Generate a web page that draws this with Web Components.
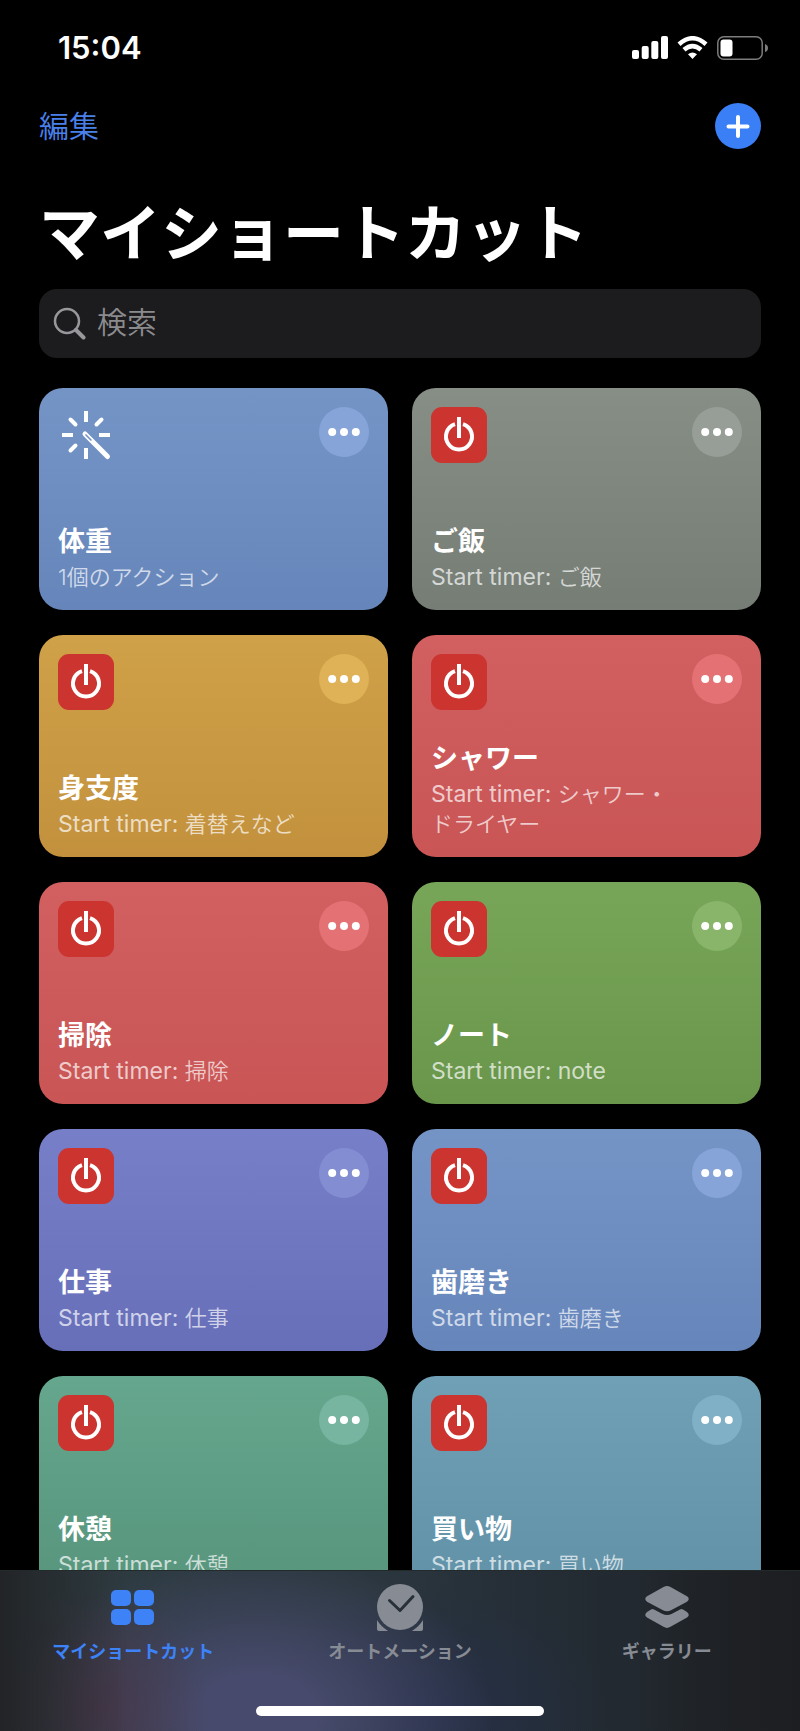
<!DOCTYPE html>
<html lang="ja">
<head>
<meta charset="utf-8">
<meta name="viewport" content="width=device-width, initial-scale=1">
<title>マイショートカット</title>
<style>
  body {
    margin: 0;
    background: #000;
    color: #fff;
    font-family: Inter, "Noto Sans CJK JP", sans-serif;
  }
</style>
</head>
<body>
<shortcuts-app>
  <status-bar slot="status">15:04</status-bar>
  <page-header slot="header">マイショートカット</page-header>
  <search-field slot="header" label="検索"></search-field>

  <shortcut-card color="blue" icon="wand"><span slot="title">体重</span>1個のアクション</shortcut-card>
  <shortcut-card color="gray"><span slot="title">ご飯</span><span lang="en">Start timer: </span>ご飯</shortcut-card>
  <shortcut-card color="yellow"><span slot="title">身支度</span><span lang="en">Start timer: </span>着替えなど</shortcut-card>
  <shortcut-card color="red"><span slot="title">シャワー</span><span lang="en">Start timer: </span>シャワー・<br>ドライヤー</shortcut-card>
  <shortcut-card color="red"><span slot="title">掃除</span><span lang="en">Start timer: </span>掃除</shortcut-card>
  <shortcut-card color="green"><span slot="title">ノート</span><span lang="en">Start timer: note</span></shortcut-card>
  <shortcut-card color="purple"><span slot="title">仕事</span><span lang="en">Start timer: </span>仕事</shortcut-card>
  <shortcut-card color="blue"><span slot="title">歯磨き</span><span lang="en">Start timer: </span>歯磨き</shortcut-card>
  <shortcut-card color="mint"><span slot="title">休憩</span><span lang="en">Start timer: </span>休憩</shortcut-card>
  <shortcut-card color="teal"><span slot="title">買い物</span><span lang="en">Start timer: </span>買い物</shortcut-card>

  <tab-bar slot="tabs">
    <tab-item icon="grid" active>マイショートカット</tab-item>
    <tab-item icon="clock">オートメーション</tab-item>
    <tab-item icon="layers">ギャラリー</tab-item>
  </tab-bar>
</shortcuts-app>

<script>
const CARD_COLORS = {
  blue: ["#7594c6", "#6686bb", "#86a4d8"],
  gray: ["#868e86", "#757d75", "#979e98"],
  yellow: ["#cfa148", "#c3913d", "#e0b257"],
  red: ["#d26061", "#c95555", "#e47274"],
  green: ["#78a659", "#69964a", "#88b569"],
  purple: ["#777fc8", "#676fb9", "#838ed2"],
  mint: ["#65a78e", "#57947c", "#77b5a0"],
  teal: ["#70a0b5", "#6091a7", "#7fb0c5"],
};

const CARD_ICONS = {
  wand: `
    <svg width="56" height="56" viewBox="0 0 56 56" fill="none" stroke="#fff" stroke-width="4" aria-hidden="true">
      <path d="M28 4v11M28 41v11M4 28h11M41 28h11"/>
      <path stroke-linecap="round" d="M12.5 12.5l5 5M43.5 12.5l-5 5M12.5 43.5l5-5"/>
      <path stroke-width="5" stroke-linecap="round" d="M27 27l22.5 22.5"/>
      <path stroke="#7190c4" stroke-width="1.5" d="M27.5 27.5l6 6"/>
    </svg>`,
  power: `
    <svg width="56" height="56" viewBox="0 0 56 56" fill="none" stroke="#fff" stroke-width="4" aria-hidden="true">
      <rect width="56" height="56" rx="11" fill="#cb342f" stroke="none"/>
      <path d="M24 17.1A13 13 0 1 0 32 17.1"/>
      <path d="M28 10v21"/>
    </svg>`,
};

const TAB_ICONS = {
  grid: `
    <svg width="48" height="48" viewBox="0 0 48 48" fill="currentColor" aria-hidden="true">
      <rect x="2" y="7" width="20" height="16" rx="5"/>
      <rect x="25" y="7" width="20" height="16" rx="5"/>
      <rect x="2" y="26" width="20" height="16" rx="5"/>
      <rect x="25" y="26" width="20" height="16" rx="5"/>
    </svg>`,
  clock: `
    <svg width="48" height="48" viewBox="0 0 48 48" fill="currentColor" aria-hidden="true">
      <circle cx="24" cy="24" r="23"/>
      <path d="M1 37Q4.500 43 12 48H3Q1 48 1 46ZM47 37Q43.500 43 36 48H45Q47 48 47 46Z"/>
      <path d="M13.500 17.500L24 27.500L37 13.500" fill="none" stroke="#28303a" stroke-width="3" stroke-linecap="round" stroke-linejoin="round"/>
    </svg>`,
  layers: `
    <svg width="48" height="48" viewBox="0 0 48 48" fill="currentColor" aria-hidden="true">
      <path d="M20.500 4Q24 2 27.500 4L44 13.300Q47.500 16 44 18.700L28 27.300Q24 29.300 20 27.300L4 18.700Q.500 16 4 13.300Z"/>
      <path d="M8 26.500Q9.500 25.700 11 26.500L19.500 31Q24 33.200 28.500 31L37 26.500Q38.500 25.700 40 26.500L44 29Q47.500 32 44 34.500L27.500 43.800Q24 46 20.500 43.800L4 34.500Q.500 32 4 29Z"/>
    </svg>`,
};

class ShadowElement extends HTMLElement {
  constructor() {
    super();
    this.attachShadow({ mode: "open" });
  }

  connectedCallback() {
    const template = document.createElement("template");
    template.innerHTML = `<style>${this.getStyles()}</style>${this.getTemplate()}`;
    this.shadowRoot.replaceChildren(template.content.cloneNode(true));
  }
}

class ShortcutsApp extends ShadowElement {
  getStyles() {
    return `
      :host {
        display: flex;
        flex-direction: column;
        height: 100vh;
      }
      header {
        padding: 0 39px;
      }
      main {
        flex: 1;
        min-height: 0;
        overflow: hidden;
        padding: 30px 39px 0;
      }
      .grid {
        display: grid;
        grid-template-columns: 1fr 1fr;
        gap: 25px 24px;
      }
    `;
  }

  getTemplate() {
    return `
      <slot name="status"></slot>
      <header><slot name="header"></slot></header>
      <main><div class="grid"><slot></slot></div></main>
      <slot name="tabs"></slot>
    `;
  }
}

class StatusBar extends ShadowElement {
  getStyles() {
    return `
      :host {
        display: flex;
        align-items: center;
        justify-content: space-between;
        height: 95px;
        padding: 0 32px 0 58px;
        font-size: 31px;
        font-weight: 600;
      }
      .icons {
        display: flex;
        align-items: center;
        gap: 9px;
      }
    `;
  }

  getTemplate() {
    return `
      <slot></slot>
      <div class="icons">
        <svg width="36" height="24" viewBox="0 0 36 24" fill="#fff" aria-hidden="true">
          <rect x="0" y="14" width="7" height="9" rx="2"/>
          <rect x="9.700" y="10" width="7" height="13" rx="2"/>
          <rect x="19.300" y="5" width="7" height="18" rx="2"/>
          <rect x="29" y="0" width="7" height="23" rx="2"/>
        </svg>
        <svg width="31" height="24" viewBox="0 0 31 24" fill="none" stroke="#fff" stroke-width="4.500" aria-hidden="true">
          <path d="M2 8.200Q15.500 -3.700 29 8.200"/>
          <path d="M7 13.800Q15.500 6.500 24 13.800"/>
          <path d="M11 18.200Q15.500 14.800 20 18.200L15.500 23Z" fill="#fff" stroke="none"/>
        </svg>
        <svg width="51" height="24" viewBox="0 0 51 24" aria-hidden="true">
          <rect x=".800" y=".800" width="44.400" height="22.400" rx="6" fill="none" stroke="#7c7c7c" stroke-width="1.500"/>
          <rect x="3.500" y="3.500" width="12" height="17" rx="3" fill="#fff"/>
          <path d="M48 8Q51 9 51 12T48 16Z" fill="#7c7c7c"/>
        </svg>
      </div>
    `;
  }
}

class PageHeader extends ShadowElement {
  getStyles() {
    return `
      :host {
        display: block;
      }
      .actions {
        display: flex;
        align-items: center;
        justify-content: space-between;
        height: 61px;
      }
      button {
        padding: 0;
        border: 0;
        background: none;
        font: inherit;
        cursor: pointer;
      }
      .edit {
        padding-bottom: 3px;
        color: #4a80ea;
        font-size: 30px;
        font-weight: 350;
      }
      .add {
        display: flex;
        width: 46px;
        height: 46px;
        border-radius: 50%;
        background: #3a7ff6;
      }
      h1 {
        margin: 0;
        padding: 34px 0 11px;
        font-size: 61px;
        line-height: 88px;
        font-weight: 700;
      }
    `;
  }

  getTemplate() {
    return `
      <div class="actions">
        <button class="edit" type="button">編集</button>
        <button class="add" type="button" aria-label="追加">
          <svg width="46" height="46" viewBox="0 0 46 46" stroke="#fff" stroke-width="4" stroke-linecap="round" aria-hidden="true">
            <path d="M23 14v19M13.500 23.500h19"/>
          </svg>
        </button>
      </div>
      <h1><slot></slot></h1>
    `;
  }
}

class SearchField extends ShadowElement {
  getStyles() {
    return `
      :host {
        display: block;
      }
      label {
        display: flex;
        align-items: center;
        gap: 11px;
        height: 69px;
        padding: 0 14px;
        border-radius: 18px;
        background: #1c1c1e;
      }
      input {
        flex: 1;
        min-width: 0;
        padding: 0 0 3px;
        border: 0;
        outline: 0;
        background: none;
        color: #fff;
        font: inherit;
        font-size: 30px;
        font-weight: 350;
      }
      input::placeholder {
        color: #8b8b8e;
        opacity: 1;
      }
    `;
  }

  getTemplate() {
    const label = this.getAttribute("label");
    return `
      <label>
        <svg width="33" height="33" viewBox="0 0 33 33" fill="none" stroke="#98989c" stroke-linecap="round" aria-hidden="true">
          <circle cx="14" cy="14" r="12" stroke-width="2.500"/>
          <path d="M23 23l7.500 7.500" stroke-width="4"/>
        </svg>
        <input type="search" placeholder="${label}" aria-label="${label}">
      </label>
    `;
  }
}

class ShortcutCard extends ShadowElement {
  getStyles() {
    const [top, bottom, button] = CARD_COLORS[this.getAttribute("color")];
    return `
      :host {
        display: flex;
        flex-direction: column;
        justify-content: space-between;
        box-sizing: border-box;
        min-height: 222px;
        padding: 19px 19px 18px;
        border-radius: 24px;
        background: linear-gradient(${top}, ${bottom});
      }
      .top {
        display: flex;
        align-items: flex-start;
        justify-content: space-between;
      }
      svg {
        display: block;
      }
      button {
        padding: 0;
        border: 0;
        border-radius: 50%;
        background: ${button};
        cursor: pointer;
      }
      h2, p {
        margin: 0;
      }
      h2 {
        font-size: 27px;
        line-height: 40px;
        font-weight: 700;
      }
      p {
        color: rgba(255, 255, 255, 0.7);
        font-size: 22px;
        line-height: 30px;
        font-weight: 350;
      }
      ::slotted(:lang(en)) {
        font-size: 23px;
        font-weight: 400;
      }
    `;
  }

  getTemplate() {
    return `
      <div class="top">
        ${CARD_ICONS[this.getAttribute("icon") || "power"]}
        <button type="button" aria-label="詳細">
          <svg width="50" height="50" viewBox="0 0 50 50" fill="#fff" aria-hidden="true">
            <circle cx="13.200" cy="25" r="4"/>
            <circle cx="25" cy="25" r="4"/>
            <circle cx="36.800" cy="25" r="4"/>
          </svg>
        </button>
      </div>
      <div>
        <h2><slot name="title"></slot></h2>
        <p><slot></slot></p>
      </div>
    `;
  }
}

class TabBar extends ShadowElement {
  getStyles() {
    return `
      :host {
        display: flex;
        flex-direction: column;
        justify-content: space-between;
        align-items: center;
        box-sizing: border-box;
        height: 161px;
        padding: 13px 0 15px;
        /* blurred colours of the cards scrolled beneath the bar */
        background:
          linear-gradient(90deg, #222427, transparent 16%, transparent 80%, #1d1e21),
          radial-gradient(ellipse 14% 75% at 12% 85%, #4a3648cc, transparent),
          radial-gradient(ellipse 30% 100% at 32% 90%, #474a6c 25%, transparent),
          radial-gradient(ellipse 22% 80% at 54% 90%, #252e46, transparent),
          linear-gradient(90deg, #2f3d42, #2b373f 45%, #232b33 72%, #1e2225);
        box-shadow: inset 0 1px #222a2c;
      }
      nav {
        display: grid;
        grid-template-columns: repeat(3, 1fr);
        width: 100%;
      }
      .indicator {
        width: 36%;
        height: 10px;
        border-radius: 5px;
        background: #fff;
      }
    `;
  }

  getTemplate() {
    return `
      <nav><slot></slot></nav>
      <div class="indicator"></div>
    `;
  }
}

class TabItem extends ShadowElement {
  getStyles() {
    return `
      :host {
        display: block;
        color: #878b93;
      }
      :host([active]) {
        color: #3d82f7;
      }
      a {
        display: flex;
        flex-direction: column;
        align-items: center;
        gap: 7px;
        color: inherit;
        font-size: 18px;
        line-height: 28px;
        font-weight: 700;
        text-decoration: none;
      }
    `;
  }

  getTemplate() {
    return `<a href="#">${TAB_ICONS[this.getAttribute("icon")]}<slot></slot></a>`;
  }
}

customElements.define("shortcuts-app", ShortcutsApp);
customElements.define("status-bar", StatusBar);
customElements.define("page-header", PageHeader);
customElements.define("search-field", SearchField);
customElements.define("shortcut-card", ShortcutCard);
customElements.define("tab-bar", TabBar);
customElements.define("tab-item", TabItem);
</script>
</body>
</html>
